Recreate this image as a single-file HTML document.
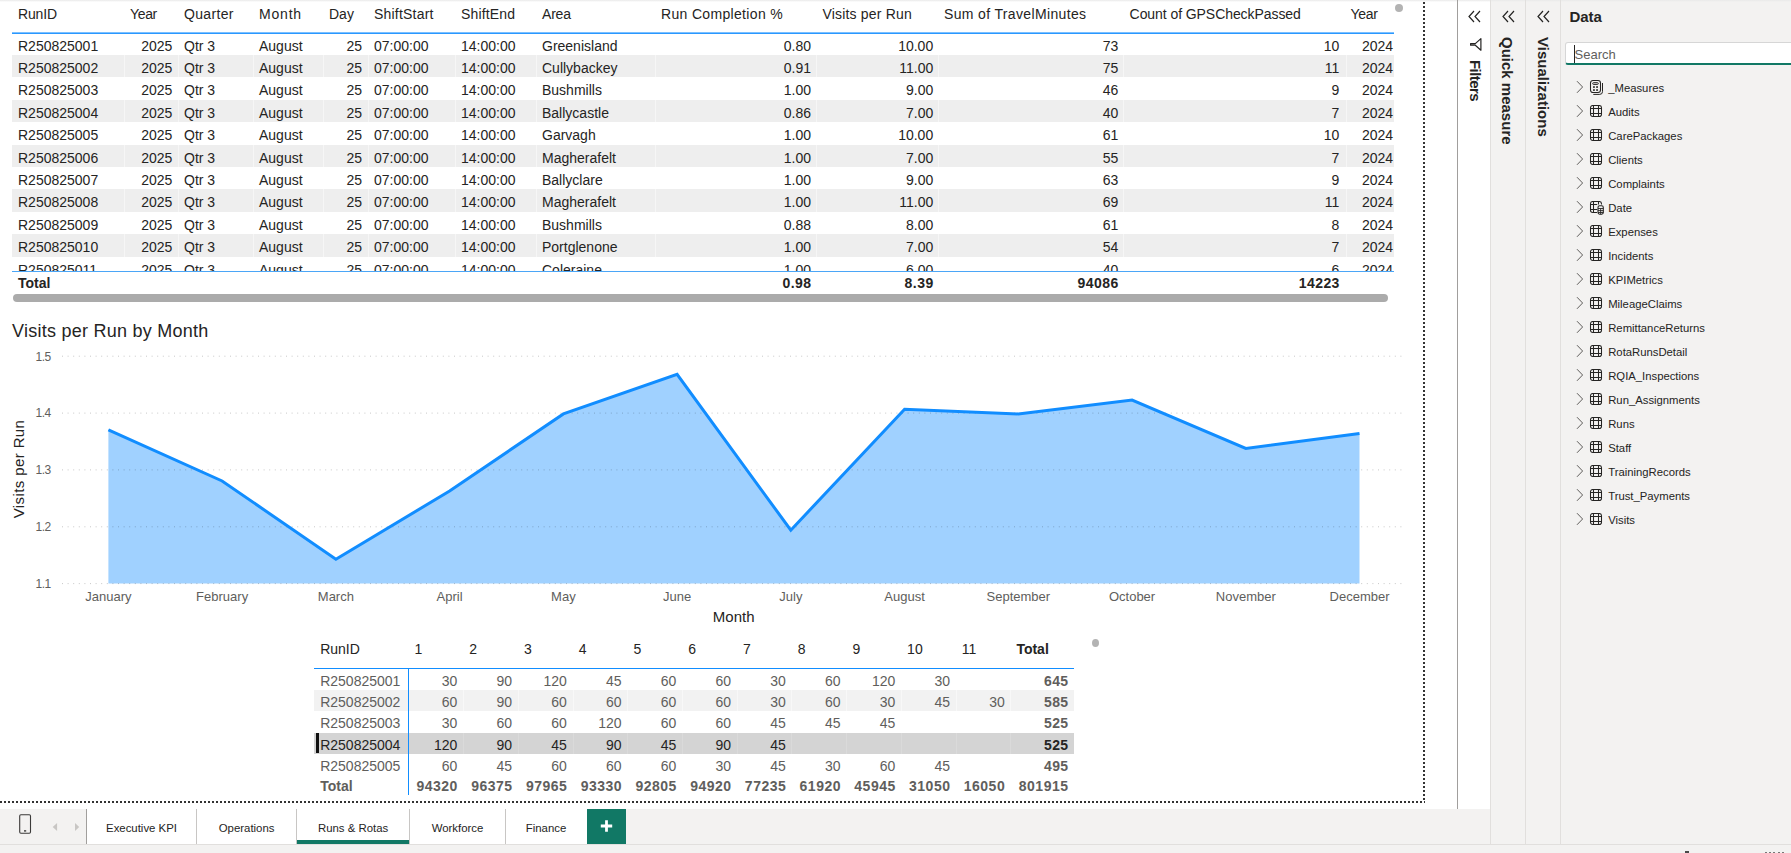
<!DOCTYPE html>
<html><head><meta charset="utf-8"><style>
html,body{margin:0;padding:0;}
body{width:1791px;height:853px;position:relative;overflow:hidden;font-family:"Liberation Sans", sans-serif;background:#fff;}
.t{position:absolute;white-space:nowrap;line-height:1;}
.r{position:absolute;}
.clip{position:absolute;overflow:hidden;}
</style></head><body>
<div class="r" style="left:0.00px;top:0.00px;width:1791.00px;height:853.00px;background:#f3f2f1;"></div>
<div class="r" style="left:0.00px;top:0.00px;width:1490.50px;height:809.00px;background:#ffffff;"></div>
<div class="r" style="left:0.00px;top:0.00px;width:1791.00px;height:2.00px;background:linear-gradient(#e9e9e9,#ffffff00);"></div>
<div class="r" style="left:1457.00px;top:0.00px;width:1.00px;height:809.00px;background:#a19f9d;"></div>
<div class="r" style="left:1490.00px;top:0.00px;width:1.00px;height:844.00px;background:#e1dfdd;"></div>
<div class="r" style="left:1525.00px;top:0.00px;width:1.00px;height:844.00px;background:#e1dfdd;"></div>
<div class="r" style="left:1560.00px;top:0.00px;width:1.00px;height:844.00px;background:#e1dfdd;"></div>
<div class="r" style="left:0.00px;top:843.50px;width:1791.00px;height:1.00px;background:#e1dfdd;"></div>
<div class="clip" style="left:0;top:0;width:1394px;height:271px;">
<div class="t" style="left:18.00px;top:38.65px;font-size:14px;font-weight:normal;color:#252423;">R250825001</div>
<div class="t" style="right:1221.60px;top:38.65px;font-size:14px;font-weight:normal;color:#252423;">2025</div>
<div class="t" style="left:184.00px;top:38.65px;font-size:14px;font-weight:normal;color:#252423;">Qtr 3</div>
<div class="t" style="left:259.00px;top:38.65px;font-size:14px;font-weight:normal;color:#252423;">August</div>
<div class="t" style="right:1032.00px;top:38.65px;font-size:14px;font-weight:normal;color:#252423;">25</div>
<div class="t" style="left:374.00px;top:38.65px;font-size:14px;font-weight:normal;color:#252423;">07:00:00</div>
<div class="t" style="left:461.00px;top:38.65px;font-size:14px;font-weight:normal;color:#252423;">14:00:00</div>
<div class="t" style="left:542.00px;top:38.65px;font-size:14px;font-weight:normal;color:#252423;">Greenisland</div>
<div class="t" style="right:583.00px;top:38.65px;font-size:14px;font-weight:normal;color:#252423;">0.80</div>
<div class="t" style="right:460.80px;top:38.65px;font-size:14px;font-weight:normal;color:#252423;">10.00</div>
<div class="t" style="right:275.70px;top:38.65px;font-size:14px;font-weight:normal;color:#252423;">73</div>
<div class="t" style="right:54.60px;top:38.65px;font-size:14px;font-weight:normal;color:#252423;">10</div>
<div class="t" style="right:0.90px;top:38.65px;font-size:14px;font-weight:normal;color:#252423;">2024</div>
<div class="r" style="left:12.00px;top:55.00px;width:1382.00px;height:22.40px;background:#eeeeee;"></div>
<div class="r" style="left:124.00px;top:55.00px;width:1.00px;height:22.40px;background:#f6f6f6;"></div>
<div class="r" style="left:178.00px;top:55.00px;width:1.00px;height:22.40px;background:#f6f6f6;"></div>
<div class="r" style="left:253.00px;top:55.00px;width:1.00px;height:22.40px;background:#f6f6f6;"></div>
<div class="r" style="left:323.00px;top:55.00px;width:1.00px;height:22.40px;background:#f6f6f6;"></div>
<div class="r" style="left:368.00px;top:55.00px;width:1.00px;height:22.40px;background:#f6f6f6;"></div>
<div class="r" style="left:455.00px;top:55.00px;width:1.00px;height:22.40px;background:#f6f6f6;"></div>
<div class="r" style="left:536.00px;top:55.00px;width:1.00px;height:22.40px;background:#f6f6f6;"></div>
<div class="r" style="left:655.00px;top:55.00px;width:1.00px;height:22.40px;background:#f6f6f6;"></div>
<div class="r" style="left:816.00px;top:55.00px;width:1.00px;height:22.40px;background:#f6f6f6;"></div>
<div class="r" style="left:938.00px;top:55.00px;width:1.00px;height:22.40px;background:#f6f6f6;"></div>
<div class="r" style="left:1123.00px;top:55.00px;width:1.00px;height:22.40px;background:#f6f6f6;"></div>
<div class="r" style="left:1345.50px;top:55.00px;width:1.00px;height:22.40px;background:#f6f6f6;"></div>
<div class="t" style="left:18.00px;top:61.05px;font-size:14px;font-weight:normal;color:#252423;">R250825002</div>
<div class="t" style="right:1221.60px;top:61.05px;font-size:14px;font-weight:normal;color:#252423;">2025</div>
<div class="t" style="left:184.00px;top:61.05px;font-size:14px;font-weight:normal;color:#252423;">Qtr 3</div>
<div class="t" style="left:259.00px;top:61.05px;font-size:14px;font-weight:normal;color:#252423;">August</div>
<div class="t" style="right:1032.00px;top:61.05px;font-size:14px;font-weight:normal;color:#252423;">25</div>
<div class="t" style="left:374.00px;top:61.05px;font-size:14px;font-weight:normal;color:#252423;">07:00:00</div>
<div class="t" style="left:461.00px;top:61.05px;font-size:14px;font-weight:normal;color:#252423;">14:00:00</div>
<div class="t" style="left:542.00px;top:61.05px;font-size:14px;font-weight:normal;color:#252423;">Cullybackey</div>
<div class="t" style="right:583.00px;top:61.05px;font-size:14px;font-weight:normal;color:#252423;">0.91</div>
<div class="t" style="right:460.80px;top:61.05px;font-size:14px;font-weight:normal;color:#252423;">11.00</div>
<div class="t" style="right:275.70px;top:61.05px;font-size:14px;font-weight:normal;color:#252423;">75</div>
<div class="t" style="right:54.60px;top:61.05px;font-size:14px;font-weight:normal;color:#252423;">11</div>
<div class="t" style="right:0.90px;top:61.05px;font-size:14px;font-weight:normal;color:#252423;">2024</div>
<div class="t" style="left:18.00px;top:83.45px;font-size:14px;font-weight:normal;color:#252423;">R250825003</div>
<div class="t" style="right:1221.60px;top:83.45px;font-size:14px;font-weight:normal;color:#252423;">2025</div>
<div class="t" style="left:184.00px;top:83.45px;font-size:14px;font-weight:normal;color:#252423;">Qtr 3</div>
<div class="t" style="left:259.00px;top:83.45px;font-size:14px;font-weight:normal;color:#252423;">August</div>
<div class="t" style="right:1032.00px;top:83.45px;font-size:14px;font-weight:normal;color:#252423;">25</div>
<div class="t" style="left:374.00px;top:83.45px;font-size:14px;font-weight:normal;color:#252423;">07:00:00</div>
<div class="t" style="left:461.00px;top:83.45px;font-size:14px;font-weight:normal;color:#252423;">14:00:00</div>
<div class="t" style="left:542.00px;top:83.45px;font-size:14px;font-weight:normal;color:#252423;">Bushmills</div>
<div class="t" style="right:583.00px;top:83.45px;font-size:14px;font-weight:normal;color:#252423;">1.00</div>
<div class="t" style="right:460.80px;top:83.45px;font-size:14px;font-weight:normal;color:#252423;">9.00</div>
<div class="t" style="right:275.70px;top:83.45px;font-size:14px;font-weight:normal;color:#252423;">46</div>
<div class="t" style="right:54.60px;top:83.45px;font-size:14px;font-weight:normal;color:#252423;">9</div>
<div class="t" style="right:0.90px;top:83.45px;font-size:14px;font-weight:normal;color:#252423;">2024</div>
<div class="r" style="left:12.00px;top:99.80px;width:1382.00px;height:22.40px;background:#eeeeee;"></div>
<div class="r" style="left:124.00px;top:99.80px;width:1.00px;height:22.40px;background:#f6f6f6;"></div>
<div class="r" style="left:178.00px;top:99.80px;width:1.00px;height:22.40px;background:#f6f6f6;"></div>
<div class="r" style="left:253.00px;top:99.80px;width:1.00px;height:22.40px;background:#f6f6f6;"></div>
<div class="r" style="left:323.00px;top:99.80px;width:1.00px;height:22.40px;background:#f6f6f6;"></div>
<div class="r" style="left:368.00px;top:99.80px;width:1.00px;height:22.40px;background:#f6f6f6;"></div>
<div class="r" style="left:455.00px;top:99.80px;width:1.00px;height:22.40px;background:#f6f6f6;"></div>
<div class="r" style="left:536.00px;top:99.80px;width:1.00px;height:22.40px;background:#f6f6f6;"></div>
<div class="r" style="left:655.00px;top:99.80px;width:1.00px;height:22.40px;background:#f6f6f6;"></div>
<div class="r" style="left:816.00px;top:99.80px;width:1.00px;height:22.40px;background:#f6f6f6;"></div>
<div class="r" style="left:938.00px;top:99.80px;width:1.00px;height:22.40px;background:#f6f6f6;"></div>
<div class="r" style="left:1123.00px;top:99.80px;width:1.00px;height:22.40px;background:#f6f6f6;"></div>
<div class="r" style="left:1345.50px;top:99.80px;width:1.00px;height:22.40px;background:#f6f6f6;"></div>
<div class="t" style="left:18.00px;top:105.85px;font-size:14px;font-weight:normal;color:#252423;">R250825004</div>
<div class="t" style="right:1221.60px;top:105.85px;font-size:14px;font-weight:normal;color:#252423;">2025</div>
<div class="t" style="left:184.00px;top:105.85px;font-size:14px;font-weight:normal;color:#252423;">Qtr 3</div>
<div class="t" style="left:259.00px;top:105.85px;font-size:14px;font-weight:normal;color:#252423;">August</div>
<div class="t" style="right:1032.00px;top:105.85px;font-size:14px;font-weight:normal;color:#252423;">25</div>
<div class="t" style="left:374.00px;top:105.85px;font-size:14px;font-weight:normal;color:#252423;">07:00:00</div>
<div class="t" style="left:461.00px;top:105.85px;font-size:14px;font-weight:normal;color:#252423;">14:00:00</div>
<div class="t" style="left:542.00px;top:105.85px;font-size:14px;font-weight:normal;color:#252423;">Ballycastle</div>
<div class="t" style="right:583.00px;top:105.85px;font-size:14px;font-weight:normal;color:#252423;">0.86</div>
<div class="t" style="right:460.80px;top:105.85px;font-size:14px;font-weight:normal;color:#252423;">7.00</div>
<div class="t" style="right:275.70px;top:105.85px;font-size:14px;font-weight:normal;color:#252423;">40</div>
<div class="t" style="right:54.60px;top:105.85px;font-size:14px;font-weight:normal;color:#252423;">7</div>
<div class="t" style="right:0.90px;top:105.85px;font-size:14px;font-weight:normal;color:#252423;">2024</div>
<div class="t" style="left:18.00px;top:128.25px;font-size:14px;font-weight:normal;color:#252423;">R250825005</div>
<div class="t" style="right:1221.60px;top:128.25px;font-size:14px;font-weight:normal;color:#252423;">2025</div>
<div class="t" style="left:184.00px;top:128.25px;font-size:14px;font-weight:normal;color:#252423;">Qtr 3</div>
<div class="t" style="left:259.00px;top:128.25px;font-size:14px;font-weight:normal;color:#252423;">August</div>
<div class="t" style="right:1032.00px;top:128.25px;font-size:14px;font-weight:normal;color:#252423;">25</div>
<div class="t" style="left:374.00px;top:128.25px;font-size:14px;font-weight:normal;color:#252423;">07:00:00</div>
<div class="t" style="left:461.00px;top:128.25px;font-size:14px;font-weight:normal;color:#252423;">14:00:00</div>
<div class="t" style="left:542.00px;top:128.25px;font-size:14px;font-weight:normal;color:#252423;">Garvagh</div>
<div class="t" style="right:583.00px;top:128.25px;font-size:14px;font-weight:normal;color:#252423;">1.00</div>
<div class="t" style="right:460.80px;top:128.25px;font-size:14px;font-weight:normal;color:#252423;">10.00</div>
<div class="t" style="right:275.70px;top:128.25px;font-size:14px;font-weight:normal;color:#252423;">61</div>
<div class="t" style="right:54.60px;top:128.25px;font-size:14px;font-weight:normal;color:#252423;">10</div>
<div class="t" style="right:0.90px;top:128.25px;font-size:14px;font-weight:normal;color:#252423;">2024</div>
<div class="r" style="left:12.00px;top:144.60px;width:1382.00px;height:22.40px;background:#eeeeee;"></div>
<div class="r" style="left:124.00px;top:144.60px;width:1.00px;height:22.40px;background:#f6f6f6;"></div>
<div class="r" style="left:178.00px;top:144.60px;width:1.00px;height:22.40px;background:#f6f6f6;"></div>
<div class="r" style="left:253.00px;top:144.60px;width:1.00px;height:22.40px;background:#f6f6f6;"></div>
<div class="r" style="left:323.00px;top:144.60px;width:1.00px;height:22.40px;background:#f6f6f6;"></div>
<div class="r" style="left:368.00px;top:144.60px;width:1.00px;height:22.40px;background:#f6f6f6;"></div>
<div class="r" style="left:455.00px;top:144.60px;width:1.00px;height:22.40px;background:#f6f6f6;"></div>
<div class="r" style="left:536.00px;top:144.60px;width:1.00px;height:22.40px;background:#f6f6f6;"></div>
<div class="r" style="left:655.00px;top:144.60px;width:1.00px;height:22.40px;background:#f6f6f6;"></div>
<div class="r" style="left:816.00px;top:144.60px;width:1.00px;height:22.40px;background:#f6f6f6;"></div>
<div class="r" style="left:938.00px;top:144.60px;width:1.00px;height:22.40px;background:#f6f6f6;"></div>
<div class="r" style="left:1123.00px;top:144.60px;width:1.00px;height:22.40px;background:#f6f6f6;"></div>
<div class="r" style="left:1345.50px;top:144.60px;width:1.00px;height:22.40px;background:#f6f6f6;"></div>
<div class="t" style="left:18.00px;top:150.65px;font-size:14px;font-weight:normal;color:#252423;">R250825006</div>
<div class="t" style="right:1221.60px;top:150.65px;font-size:14px;font-weight:normal;color:#252423;">2025</div>
<div class="t" style="left:184.00px;top:150.65px;font-size:14px;font-weight:normal;color:#252423;">Qtr 3</div>
<div class="t" style="left:259.00px;top:150.65px;font-size:14px;font-weight:normal;color:#252423;">August</div>
<div class="t" style="right:1032.00px;top:150.65px;font-size:14px;font-weight:normal;color:#252423;">25</div>
<div class="t" style="left:374.00px;top:150.65px;font-size:14px;font-weight:normal;color:#252423;">07:00:00</div>
<div class="t" style="left:461.00px;top:150.65px;font-size:14px;font-weight:normal;color:#252423;">14:00:00</div>
<div class="t" style="left:542.00px;top:150.65px;font-size:14px;font-weight:normal;color:#252423;">Magherafelt</div>
<div class="t" style="right:583.00px;top:150.65px;font-size:14px;font-weight:normal;color:#252423;">1.00</div>
<div class="t" style="right:460.80px;top:150.65px;font-size:14px;font-weight:normal;color:#252423;">7.00</div>
<div class="t" style="right:275.70px;top:150.65px;font-size:14px;font-weight:normal;color:#252423;">55</div>
<div class="t" style="right:54.60px;top:150.65px;font-size:14px;font-weight:normal;color:#252423;">7</div>
<div class="t" style="right:0.90px;top:150.65px;font-size:14px;font-weight:normal;color:#252423;">2024</div>
<div class="t" style="left:18.00px;top:173.05px;font-size:14px;font-weight:normal;color:#252423;">R250825007</div>
<div class="t" style="right:1221.60px;top:173.05px;font-size:14px;font-weight:normal;color:#252423;">2025</div>
<div class="t" style="left:184.00px;top:173.05px;font-size:14px;font-weight:normal;color:#252423;">Qtr 3</div>
<div class="t" style="left:259.00px;top:173.05px;font-size:14px;font-weight:normal;color:#252423;">August</div>
<div class="t" style="right:1032.00px;top:173.05px;font-size:14px;font-weight:normal;color:#252423;">25</div>
<div class="t" style="left:374.00px;top:173.05px;font-size:14px;font-weight:normal;color:#252423;">07:00:00</div>
<div class="t" style="left:461.00px;top:173.05px;font-size:14px;font-weight:normal;color:#252423;">14:00:00</div>
<div class="t" style="left:542.00px;top:173.05px;font-size:14px;font-weight:normal;color:#252423;">Ballyclare</div>
<div class="t" style="right:583.00px;top:173.05px;font-size:14px;font-weight:normal;color:#252423;">1.00</div>
<div class="t" style="right:460.80px;top:173.05px;font-size:14px;font-weight:normal;color:#252423;">9.00</div>
<div class="t" style="right:275.70px;top:173.05px;font-size:14px;font-weight:normal;color:#252423;">63</div>
<div class="t" style="right:54.60px;top:173.05px;font-size:14px;font-weight:normal;color:#252423;">9</div>
<div class="t" style="right:0.90px;top:173.05px;font-size:14px;font-weight:normal;color:#252423;">2024</div>
<div class="r" style="left:12.00px;top:189.40px;width:1382.00px;height:22.40px;background:#eeeeee;"></div>
<div class="r" style="left:124.00px;top:189.40px;width:1.00px;height:22.40px;background:#f6f6f6;"></div>
<div class="r" style="left:178.00px;top:189.40px;width:1.00px;height:22.40px;background:#f6f6f6;"></div>
<div class="r" style="left:253.00px;top:189.40px;width:1.00px;height:22.40px;background:#f6f6f6;"></div>
<div class="r" style="left:323.00px;top:189.40px;width:1.00px;height:22.40px;background:#f6f6f6;"></div>
<div class="r" style="left:368.00px;top:189.40px;width:1.00px;height:22.40px;background:#f6f6f6;"></div>
<div class="r" style="left:455.00px;top:189.40px;width:1.00px;height:22.40px;background:#f6f6f6;"></div>
<div class="r" style="left:536.00px;top:189.40px;width:1.00px;height:22.40px;background:#f6f6f6;"></div>
<div class="r" style="left:655.00px;top:189.40px;width:1.00px;height:22.40px;background:#f6f6f6;"></div>
<div class="r" style="left:816.00px;top:189.40px;width:1.00px;height:22.40px;background:#f6f6f6;"></div>
<div class="r" style="left:938.00px;top:189.40px;width:1.00px;height:22.40px;background:#f6f6f6;"></div>
<div class="r" style="left:1123.00px;top:189.40px;width:1.00px;height:22.40px;background:#f6f6f6;"></div>
<div class="r" style="left:1345.50px;top:189.40px;width:1.00px;height:22.40px;background:#f6f6f6;"></div>
<div class="t" style="left:18.00px;top:195.45px;font-size:14px;font-weight:normal;color:#252423;">R250825008</div>
<div class="t" style="right:1221.60px;top:195.45px;font-size:14px;font-weight:normal;color:#252423;">2025</div>
<div class="t" style="left:184.00px;top:195.45px;font-size:14px;font-weight:normal;color:#252423;">Qtr 3</div>
<div class="t" style="left:259.00px;top:195.45px;font-size:14px;font-weight:normal;color:#252423;">August</div>
<div class="t" style="right:1032.00px;top:195.45px;font-size:14px;font-weight:normal;color:#252423;">25</div>
<div class="t" style="left:374.00px;top:195.45px;font-size:14px;font-weight:normal;color:#252423;">07:00:00</div>
<div class="t" style="left:461.00px;top:195.45px;font-size:14px;font-weight:normal;color:#252423;">14:00:00</div>
<div class="t" style="left:542.00px;top:195.45px;font-size:14px;font-weight:normal;color:#252423;">Magherafelt</div>
<div class="t" style="right:583.00px;top:195.45px;font-size:14px;font-weight:normal;color:#252423;">1.00</div>
<div class="t" style="right:460.80px;top:195.45px;font-size:14px;font-weight:normal;color:#252423;">11.00</div>
<div class="t" style="right:275.70px;top:195.45px;font-size:14px;font-weight:normal;color:#252423;">69</div>
<div class="t" style="right:54.60px;top:195.45px;font-size:14px;font-weight:normal;color:#252423;">11</div>
<div class="t" style="right:0.90px;top:195.45px;font-size:14px;font-weight:normal;color:#252423;">2024</div>
<div class="t" style="left:18.00px;top:217.85px;font-size:14px;font-weight:normal;color:#252423;">R250825009</div>
<div class="t" style="right:1221.60px;top:217.85px;font-size:14px;font-weight:normal;color:#252423;">2025</div>
<div class="t" style="left:184.00px;top:217.85px;font-size:14px;font-weight:normal;color:#252423;">Qtr 3</div>
<div class="t" style="left:259.00px;top:217.85px;font-size:14px;font-weight:normal;color:#252423;">August</div>
<div class="t" style="right:1032.00px;top:217.85px;font-size:14px;font-weight:normal;color:#252423;">25</div>
<div class="t" style="left:374.00px;top:217.85px;font-size:14px;font-weight:normal;color:#252423;">07:00:00</div>
<div class="t" style="left:461.00px;top:217.85px;font-size:14px;font-weight:normal;color:#252423;">14:00:00</div>
<div class="t" style="left:542.00px;top:217.85px;font-size:14px;font-weight:normal;color:#252423;">Bushmills</div>
<div class="t" style="right:583.00px;top:217.85px;font-size:14px;font-weight:normal;color:#252423;">0.88</div>
<div class="t" style="right:460.80px;top:217.85px;font-size:14px;font-weight:normal;color:#252423;">8.00</div>
<div class="t" style="right:275.70px;top:217.85px;font-size:14px;font-weight:normal;color:#252423;">61</div>
<div class="t" style="right:54.60px;top:217.85px;font-size:14px;font-weight:normal;color:#252423;">8</div>
<div class="t" style="right:0.90px;top:217.85px;font-size:14px;font-weight:normal;color:#252423;">2024</div>
<div class="r" style="left:12.00px;top:234.20px;width:1382.00px;height:22.40px;background:#eeeeee;"></div>
<div class="r" style="left:124.00px;top:234.20px;width:1.00px;height:22.40px;background:#f6f6f6;"></div>
<div class="r" style="left:178.00px;top:234.20px;width:1.00px;height:22.40px;background:#f6f6f6;"></div>
<div class="r" style="left:253.00px;top:234.20px;width:1.00px;height:22.40px;background:#f6f6f6;"></div>
<div class="r" style="left:323.00px;top:234.20px;width:1.00px;height:22.40px;background:#f6f6f6;"></div>
<div class="r" style="left:368.00px;top:234.20px;width:1.00px;height:22.40px;background:#f6f6f6;"></div>
<div class="r" style="left:455.00px;top:234.20px;width:1.00px;height:22.40px;background:#f6f6f6;"></div>
<div class="r" style="left:536.00px;top:234.20px;width:1.00px;height:22.40px;background:#f6f6f6;"></div>
<div class="r" style="left:655.00px;top:234.20px;width:1.00px;height:22.40px;background:#f6f6f6;"></div>
<div class="r" style="left:816.00px;top:234.20px;width:1.00px;height:22.40px;background:#f6f6f6;"></div>
<div class="r" style="left:938.00px;top:234.20px;width:1.00px;height:22.40px;background:#f6f6f6;"></div>
<div class="r" style="left:1123.00px;top:234.20px;width:1.00px;height:22.40px;background:#f6f6f6;"></div>
<div class="r" style="left:1345.50px;top:234.20px;width:1.00px;height:22.40px;background:#f6f6f6;"></div>
<div class="t" style="left:18.00px;top:240.25px;font-size:14px;font-weight:normal;color:#252423;">R250825010</div>
<div class="t" style="right:1221.60px;top:240.25px;font-size:14px;font-weight:normal;color:#252423;">2025</div>
<div class="t" style="left:184.00px;top:240.25px;font-size:14px;font-weight:normal;color:#252423;">Qtr 3</div>
<div class="t" style="left:259.00px;top:240.25px;font-size:14px;font-weight:normal;color:#252423;">August</div>
<div class="t" style="right:1032.00px;top:240.25px;font-size:14px;font-weight:normal;color:#252423;">25</div>
<div class="t" style="left:374.00px;top:240.25px;font-size:14px;font-weight:normal;color:#252423;">07:00:00</div>
<div class="t" style="left:461.00px;top:240.25px;font-size:14px;font-weight:normal;color:#252423;">14:00:00</div>
<div class="t" style="left:542.00px;top:240.25px;font-size:14px;font-weight:normal;color:#252423;">Portglenone</div>
<div class="t" style="right:583.00px;top:240.25px;font-size:14px;font-weight:normal;color:#252423;">1.00</div>
<div class="t" style="right:460.80px;top:240.25px;font-size:14px;font-weight:normal;color:#252423;">7.00</div>
<div class="t" style="right:275.70px;top:240.25px;font-size:14px;font-weight:normal;color:#252423;">54</div>
<div class="t" style="right:54.60px;top:240.25px;font-size:14px;font-weight:normal;color:#252423;">7</div>
<div class="t" style="right:0.90px;top:240.25px;font-size:14px;font-weight:normal;color:#252423;">2024</div>
<div class="t" style="left:18.00px;top:262.65px;font-size:14px;font-weight:normal;color:#252423;">R250825011</div>
<div class="t" style="right:1221.60px;top:262.65px;font-size:14px;font-weight:normal;color:#252423;">2025</div>
<div class="t" style="left:184.00px;top:262.65px;font-size:14px;font-weight:normal;color:#252423;">Qtr 3</div>
<div class="t" style="left:259.00px;top:262.65px;font-size:14px;font-weight:normal;color:#252423;">August</div>
<div class="t" style="right:1032.00px;top:262.65px;font-size:14px;font-weight:normal;color:#252423;">25</div>
<div class="t" style="left:374.00px;top:262.65px;font-size:14px;font-weight:normal;color:#252423;">07:00:00</div>
<div class="t" style="left:461.00px;top:262.65px;font-size:14px;font-weight:normal;color:#252423;">14:00:00</div>
<div class="t" style="left:542.00px;top:262.65px;font-size:14px;font-weight:normal;color:#252423;">Coleraine</div>
<div class="t" style="right:583.00px;top:262.65px;font-size:14px;font-weight:normal;color:#252423;">1.00</div>
<div class="t" style="right:460.80px;top:262.65px;font-size:14px;font-weight:normal;color:#252423;">6.00</div>
<div class="t" style="right:275.70px;top:262.65px;font-size:14px;font-weight:normal;color:#252423;">40</div>
<div class="t" style="right:54.60px;top:262.65px;font-size:14px;font-weight:normal;color:#252423;">6</div>
<div class="t" style="right:0.90px;top:262.65px;font-size:14px;font-weight:normal;color:#252423;">2024</div>
</div>
<div class="t" style="left:18.00px;top:6.90px;font-size:14px;font-weight:normal;color:#252423;letter-spacing:-0.15px;">RunID</div>
<div class="t" style="left:130.00px;top:6.90px;font-size:14px;font-weight:normal;color:#252423;letter-spacing:-0.35px;">Year</div>
<div class="t" style="left:184.00px;top:6.90px;font-size:14px;font-weight:normal;color:#252423;letter-spacing:0.33px;">Quarter</div>
<div class="t" style="left:259.00px;top:6.90px;font-size:14px;font-weight:normal;color:#252423;letter-spacing:0.8px;">Month</div>
<div class="t" style="left:329.00px;top:6.90px;font-size:14px;font-weight:normal;color:#252423;letter-spacing:0px;">Day</div>
<div class="t" style="left:374.00px;top:6.90px;font-size:14px;font-weight:normal;color:#252423;letter-spacing:0.2px;">ShiftStart</div>
<div class="t" style="left:461.00px;top:6.90px;font-size:14px;font-weight:normal;color:#252423;letter-spacing:0.17px;">ShiftEnd</div>
<div class="t" style="left:542.00px;top:6.90px;font-size:14px;font-weight:normal;color:#252423;letter-spacing:-0.2px;">Area</div>
<div class="t" style="left:661.00px;top:6.90px;font-size:14px;font-weight:normal;color:#252423;letter-spacing:0.33px;">Run Completion %</div>
<div class="t" style="left:822.50px;top:6.90px;font-size:14px;font-weight:normal;color:#252423;letter-spacing:0.18px;">Visits per Run</div>
<div class="t" style="left:944.00px;top:6.90px;font-size:14px;font-weight:normal;color:#252423;letter-spacing:0.35px;">Sum of TravelMinutes</div>
<div class="t" style="left:1129.60px;top:6.90px;font-size:14px;font-weight:normal;color:#252423;letter-spacing:-0.07px;">Count of GPSCheckPassed</div>
<div class="t" style="left:1350.60px;top:6.90px;font-size:14px;font-weight:normal;color:#252423;letter-spacing:-0.35px;">Year</div>
<div class="r" style="left:12.00px;top:32.00px;width:1382.00px;height:1.00px;background:rgba(17,141,255,0.55);"></div>
<div class="r" style="left:12.00px;top:33.00px;width:1382.00px;height:1.00px;background:#2a98ff;"></div>
<div class="r" style="left:12.00px;top:270.80px;width:1382.00px;height:1.00px;background:#4ba6f7;"></div>
<div class="t" style="left:18.00px;top:275.75px;font-size:14px;font-weight:bold;color:#252423;">Total</div>
<div class="t" style="right:979.55px;top:275.75px;font-size:14px;font-weight:bold;color:#252423;letter-spacing:0.45px;">0.98</div>
<div class="t" style="right:857.35px;top:275.75px;font-size:14px;font-weight:bold;color:#252423;letter-spacing:0.45px;">8.39</div>
<div class="t" style="right:672.25px;top:275.75px;font-size:14px;font-weight:bold;color:#252423;letter-spacing:0.45px;">94086</div>
<div class="t" style="right:451.15px;top:275.75px;font-size:14px;font-weight:bold;color:#252423;letter-spacing:0.45px;">14223</div>
<div class="r" style="left:13.00px;top:294.20px;width:1375.00px;height:7.50px;background:#ababab;border-radius:4px;"></div>
<div class="r" style="left:1395.00px;top:4.00px;width:8.00px;height:8.00px;background:#b3b3b3;border-radius:50%;"></div>
<div class="t" style="left:12.00px;top:321.56px;font-size:18px;font-weight:normal;color:#252423;letter-spacing:0.25px;">Visits per Run by Month</div>
<div class="t" style="right:1740.15px;top:350.64px;font-size:12px;font-weight:normal;color:#605e5c;letter-spacing:-0.45px;">1.5</div>
<div class="t" style="right:1740.15px;top:407.49px;font-size:12px;font-weight:normal;color:#605e5c;letter-spacing:-0.45px;">1.4</div>
<div class="t" style="right:1740.15px;top:464.34px;font-size:12px;font-weight:normal;color:#605e5c;letter-spacing:-0.45px;">1.3</div>
<div class="t" style="right:1740.15px;top:521.19px;font-size:12px;font-weight:normal;color:#605e5c;letter-spacing:-0.45px;">1.2</div>
<div class="t" style="right:1740.15px;top:578.04px;font-size:12px;font-weight:normal;color:#605e5c;letter-spacing:-0.45px;">1.1</div>
<svg class="r" style="left:0;top:0" width="1791" height="853" viewBox="0 0 1791 853"><polygon points="108.4,583.6 108.4,429.8 222.1,481.0 335.9,559.2 449.6,491.0 563.4,413.9 677.1,374.3 790.8,530.2 904.6,409.3 1018.3,413.9 1132.1,400.0 1245.8,448.4 1359.5,433.6 1359.5,583.6" fill="#a0d1ff"/><line x1="62" y1="356.2" x2="1404" y2="356.2" stroke="rgba(0,0,0,0.22)" stroke-width="1" stroke-dasharray="1 4.6"/><line x1="62" y1="413.1" x2="1404" y2="413.1" stroke="rgba(0,0,0,0.22)" stroke-width="1" stroke-dasharray="1 4.6"/><line x1="62" y1="469.9" x2="1404" y2="469.9" stroke="rgba(0,0,0,0.22)" stroke-width="1" stroke-dasharray="1 4.6"/><line x1="62" y1="526.8" x2="1404" y2="526.8" stroke="rgba(0,0,0,0.22)" stroke-width="1" stroke-dasharray="1 4.6"/><line x1="62" y1="583.6" x2="1404" y2="583.6" stroke="rgba(0,0,0,0.22)" stroke-width="1" stroke-dasharray="1 4.6"/><polyline points="108.4,429.8 222.1,481.0 335.9,559.2 449.6,491.0 563.4,413.9 677.1,374.3 790.8,530.2 904.6,409.3 1018.3,413.9 1132.1,400.0 1245.8,448.4 1359.5,433.6" fill="none" stroke="#118dff" stroke-width="3" stroke-linejoin="miter"/></svg>
<div class="t" style="left:108.40px;transform:translateX(-50%);top:590.10px;font-size:13px;font-weight:normal;color:#605e5c;">January</div>
<div class="t" style="left:222.14px;transform:translateX(-50%);top:590.10px;font-size:13px;font-weight:normal;color:#605e5c;">February</div>
<div class="t" style="left:335.88px;transform:translateX(-50%);top:590.10px;font-size:13px;font-weight:normal;color:#605e5c;">March</div>
<div class="t" style="left:449.62px;transform:translateX(-50%);top:590.10px;font-size:13px;font-weight:normal;color:#605e5c;">April</div>
<div class="t" style="left:563.36px;transform:translateX(-50%);top:590.10px;font-size:13px;font-weight:normal;color:#605e5c;">May</div>
<div class="t" style="left:677.10px;transform:translateX(-50%);top:590.10px;font-size:13px;font-weight:normal;color:#605e5c;">June</div>
<div class="t" style="left:790.84px;transform:translateX(-50%);top:590.10px;font-size:13px;font-weight:normal;color:#605e5c;">July</div>
<div class="t" style="left:904.58px;transform:translateX(-50%);top:590.10px;font-size:13px;font-weight:normal;color:#605e5c;">August</div>
<div class="t" style="left:1018.32px;transform:translateX(-50%);top:590.10px;font-size:13px;font-weight:normal;color:#605e5c;">September</div>
<div class="t" style="left:1132.06px;transform:translateX(-50%);top:590.10px;font-size:13px;font-weight:normal;color:#605e5c;">October</div>
<div class="t" style="left:1245.80px;transform:translateX(-50%);top:590.10px;font-size:13px;font-weight:normal;color:#605e5c;">November</div>
<div class="t" style="left:1359.54px;transform:translateX(-50%);top:590.10px;font-size:13px;font-weight:normal;color:#605e5c;">December</div>
<div class="t" style="left:733.70px;transform:translateX(-50%);top:609.10px;font-size:15px;font-weight:normal;color:#252423;">Month</div>
<div class="t" style="left:17.8px;top:469.3px;font-size:15px;color:#252423;letter-spacing:0.4px;transform:translate(-50%,-50%) rotate(-90deg);line-height:15px;">Visits per Run</div>
<div class="r" style="left:314.00px;top:668.00px;width:760.30px;height:1.20px;background:#118dff;"></div>
<div class="t" style="left:320.20px;top:642.15px;font-size:14px;font-weight:normal;color:#252423;">RunID</div>
<div class="t" style="left:414.62px;top:642.15px;font-size:14px;font-weight:normal;color:#252423;">1</div>
<div class="t" style="left:469.34px;top:642.15px;font-size:14px;font-weight:normal;color:#252423;">2</div>
<div class="t" style="left:524.06px;top:642.15px;font-size:14px;font-weight:normal;color:#252423;">3</div>
<div class="t" style="left:578.78px;top:642.15px;font-size:14px;font-weight:normal;color:#252423;">4</div>
<div class="t" style="left:633.50px;top:642.15px;font-size:14px;font-weight:normal;color:#252423;">5</div>
<div class="t" style="left:688.22px;top:642.15px;font-size:14px;font-weight:normal;color:#252423;">6</div>
<div class="t" style="left:742.94px;top:642.15px;font-size:14px;font-weight:normal;color:#252423;">7</div>
<div class="t" style="left:797.66px;top:642.15px;font-size:14px;font-weight:normal;color:#252423;">8</div>
<div class="t" style="left:852.38px;top:642.15px;font-size:14px;font-weight:normal;color:#252423;">9</div>
<div class="t" style="left:907.10px;top:642.15px;font-size:14px;font-weight:normal;color:#252423;">10</div>
<div class="t" style="left:961.82px;top:642.15px;font-size:14px;font-weight:normal;color:#252423;">11</div>
<div class="t" style="left:1016.40px;top:642.15px;font-size:14px;font-weight:bold;color:#252423;">Total</div>
<div class="t" style="left:320.20px;top:673.85px;font-size:14px;font-weight:normal;color:#605e5c;">R250825001</div>
<div class="t" style="right:1333.60px;top:673.85px;font-size:14px;font-weight:normal;color:#605e5c;">30</div>
<div class="t" style="right:1278.87px;top:673.85px;font-size:14px;font-weight:normal;color:#605e5c;">90</div>
<div class="t" style="right:1224.14px;top:673.85px;font-size:14px;font-weight:normal;color:#605e5c;">120</div>
<div class="t" style="right:1169.41px;top:673.85px;font-size:14px;font-weight:normal;color:#605e5c;">45</div>
<div class="t" style="right:1114.68px;top:673.85px;font-size:14px;font-weight:normal;color:#605e5c;">60</div>
<div class="t" style="right:1059.95px;top:673.85px;font-size:14px;font-weight:normal;color:#605e5c;">60</div>
<div class="t" style="right:1005.22px;top:673.85px;font-size:14px;font-weight:normal;color:#605e5c;">30</div>
<div class="t" style="right:950.49px;top:673.85px;font-size:14px;font-weight:normal;color:#605e5c;">60</div>
<div class="t" style="right:895.76px;top:673.85px;font-size:14px;font-weight:normal;color:#605e5c;">120</div>
<div class="t" style="right:841.03px;top:673.85px;font-size:14px;font-weight:normal;color:#605e5c;">30</div>
<div class="t" style="right:722.70px;top:673.85px;font-size:14px;font-weight:bold;color:#605e5c;letter-spacing:0.3px;">645</div>
<div class="r" style="left:314.00px;top:689.90px;width:760.30px;height:21.30px;background:#f2f2f2;"></div>
<div class="r" style="left:463.14px;top:689.90px;width:1.00px;height:21.30px;background:#f8f8f8;"></div>
<div class="r" style="left:517.86px;top:689.90px;width:1.00px;height:21.30px;background:#f8f8f8;"></div>
<div class="r" style="left:572.58px;top:689.90px;width:1.00px;height:21.30px;background:#f8f8f8;"></div>
<div class="r" style="left:627.30px;top:689.90px;width:1.00px;height:21.30px;background:#f8f8f8;"></div>
<div class="r" style="left:682.02px;top:689.90px;width:1.00px;height:21.30px;background:#f8f8f8;"></div>
<div class="r" style="left:736.74px;top:689.90px;width:1.00px;height:21.30px;background:#f8f8f8;"></div>
<div class="r" style="left:791.46px;top:689.90px;width:1.00px;height:21.30px;background:#f8f8f8;"></div>
<div class="r" style="left:846.18px;top:689.90px;width:1.00px;height:21.30px;background:#f8f8f8;"></div>
<div class="r" style="left:900.90px;top:689.90px;width:1.00px;height:21.30px;background:#f8f8f8;"></div>
<div class="r" style="left:955.62px;top:689.90px;width:1.00px;height:21.30px;background:#f8f8f8;"></div>
<div class="r" style="left:1010.34px;top:689.90px;width:1.00px;height:21.30px;background:#f8f8f8;"></div>
<div class="t" style="left:320.20px;top:695.15px;font-size:14px;font-weight:normal;color:#605e5c;">R250825002</div>
<div class="t" style="right:1333.60px;top:695.15px;font-size:14px;font-weight:normal;color:#605e5c;">60</div>
<div class="t" style="right:1278.87px;top:695.15px;font-size:14px;font-weight:normal;color:#605e5c;">90</div>
<div class="t" style="right:1224.14px;top:695.15px;font-size:14px;font-weight:normal;color:#605e5c;">60</div>
<div class="t" style="right:1169.41px;top:695.15px;font-size:14px;font-weight:normal;color:#605e5c;">60</div>
<div class="t" style="right:1114.68px;top:695.15px;font-size:14px;font-weight:normal;color:#605e5c;">60</div>
<div class="t" style="right:1059.95px;top:695.15px;font-size:14px;font-weight:normal;color:#605e5c;">60</div>
<div class="t" style="right:1005.22px;top:695.15px;font-size:14px;font-weight:normal;color:#605e5c;">30</div>
<div class="t" style="right:950.49px;top:695.15px;font-size:14px;font-weight:normal;color:#605e5c;">60</div>
<div class="t" style="right:895.76px;top:695.15px;font-size:14px;font-weight:normal;color:#605e5c;">30</div>
<div class="t" style="right:841.03px;top:695.15px;font-size:14px;font-weight:normal;color:#605e5c;">45</div>
<div class="t" style="right:786.30px;top:695.15px;font-size:14px;font-weight:normal;color:#605e5c;">30</div>
<div class="t" style="right:722.70px;top:695.15px;font-size:14px;font-weight:bold;color:#605e5c;letter-spacing:0.3px;">585</div>
<div class="t" style="left:320.20px;top:716.45px;font-size:14px;font-weight:normal;color:#605e5c;">R250825003</div>
<div class="t" style="right:1333.60px;top:716.45px;font-size:14px;font-weight:normal;color:#605e5c;">30</div>
<div class="t" style="right:1278.87px;top:716.45px;font-size:14px;font-weight:normal;color:#605e5c;">60</div>
<div class="t" style="right:1224.14px;top:716.45px;font-size:14px;font-weight:normal;color:#605e5c;">60</div>
<div class="t" style="right:1169.41px;top:716.45px;font-size:14px;font-weight:normal;color:#605e5c;">120</div>
<div class="t" style="right:1114.68px;top:716.45px;font-size:14px;font-weight:normal;color:#605e5c;">60</div>
<div class="t" style="right:1059.95px;top:716.45px;font-size:14px;font-weight:normal;color:#605e5c;">60</div>
<div class="t" style="right:1005.22px;top:716.45px;font-size:14px;font-weight:normal;color:#605e5c;">45</div>
<div class="t" style="right:950.49px;top:716.45px;font-size:14px;font-weight:normal;color:#605e5c;">45</div>
<div class="t" style="right:895.76px;top:716.45px;font-size:14px;font-weight:normal;color:#605e5c;">45</div>
<div class="t" style="right:722.70px;top:716.45px;font-size:14px;font-weight:bold;color:#605e5c;letter-spacing:0.3px;">525</div>
<div class="r" style="left:314.00px;top:732.50px;width:760.30px;height:21.30px;background:#d4d4d4;"></div>
<div class="r" style="left:463.14px;top:732.50px;width:1.00px;height:21.30px;background:#dadada;"></div>
<div class="r" style="left:517.86px;top:732.50px;width:1.00px;height:21.30px;background:#dadada;"></div>
<div class="r" style="left:572.58px;top:732.50px;width:1.00px;height:21.30px;background:#dadada;"></div>
<div class="r" style="left:627.30px;top:732.50px;width:1.00px;height:21.30px;background:#dadada;"></div>
<div class="r" style="left:682.02px;top:732.50px;width:1.00px;height:21.30px;background:#dadada;"></div>
<div class="r" style="left:736.74px;top:732.50px;width:1.00px;height:21.30px;background:#dadada;"></div>
<div class="r" style="left:791.46px;top:732.50px;width:1.00px;height:21.30px;background:#dadada;"></div>
<div class="r" style="left:846.18px;top:732.50px;width:1.00px;height:21.30px;background:#dadada;"></div>
<div class="r" style="left:900.90px;top:732.50px;width:1.00px;height:21.30px;background:#dadada;"></div>
<div class="r" style="left:955.62px;top:732.50px;width:1.00px;height:21.30px;background:#dadada;"></div>
<div class="r" style="left:1010.34px;top:732.50px;width:1.00px;height:21.30px;background:#dadada;"></div>
<div class="r" style="left:316.20px;top:733.00px;width:3.00px;height:20.30px;background:#111111;"></div>
<div class="t" style="left:320.20px;top:737.75px;font-size:14px;font-weight:normal;color:#252423;">R250825004</div>
<div class="t" style="right:1333.60px;top:737.75px;font-size:14px;font-weight:normal;color:#252423;">120</div>
<div class="t" style="right:1278.87px;top:737.75px;font-size:14px;font-weight:normal;color:#252423;">90</div>
<div class="t" style="right:1224.14px;top:737.75px;font-size:14px;font-weight:normal;color:#252423;">45</div>
<div class="t" style="right:1169.41px;top:737.75px;font-size:14px;font-weight:normal;color:#252423;">90</div>
<div class="t" style="right:1114.68px;top:737.75px;font-size:14px;font-weight:normal;color:#252423;">45</div>
<div class="t" style="right:1059.95px;top:737.75px;font-size:14px;font-weight:normal;color:#252423;">90</div>
<div class="t" style="right:1005.22px;top:737.75px;font-size:14px;font-weight:normal;color:#252423;">45</div>
<div class="t" style="right:722.70px;top:737.75px;font-size:14px;font-weight:bold;color:#252423;letter-spacing:0.3px;">525</div>
<div class="t" style="left:320.20px;top:759.05px;font-size:14px;font-weight:normal;color:#605e5c;">R250825005</div>
<div class="t" style="right:1333.60px;top:759.05px;font-size:14px;font-weight:normal;color:#605e5c;">60</div>
<div class="t" style="right:1278.87px;top:759.05px;font-size:14px;font-weight:normal;color:#605e5c;">45</div>
<div class="t" style="right:1224.14px;top:759.05px;font-size:14px;font-weight:normal;color:#605e5c;">60</div>
<div class="t" style="right:1169.41px;top:759.05px;font-size:14px;font-weight:normal;color:#605e5c;">60</div>
<div class="t" style="right:1114.68px;top:759.05px;font-size:14px;font-weight:normal;color:#605e5c;">60</div>
<div class="t" style="right:1059.95px;top:759.05px;font-size:14px;font-weight:normal;color:#605e5c;">30</div>
<div class="t" style="right:1005.22px;top:759.05px;font-size:14px;font-weight:normal;color:#605e5c;">45</div>
<div class="t" style="right:950.49px;top:759.05px;font-size:14px;font-weight:normal;color:#605e5c;">30</div>
<div class="t" style="right:895.76px;top:759.05px;font-size:14px;font-weight:normal;color:#605e5c;">60</div>
<div class="t" style="right:841.03px;top:759.05px;font-size:14px;font-weight:normal;color:#605e5c;">45</div>
<div class="t" style="right:722.70px;top:759.05px;font-size:14px;font-weight:bold;color:#605e5c;letter-spacing:0.3px;">495</div>
<div class="t" style="left:320.20px;top:779.05px;font-size:14px;font-weight:bold;color:#605e5c;">Total</div>
<div class="t" style="right:1333.10px;top:779.05px;font-size:14px;font-weight:bold;color:#605e5c;letter-spacing:0.5px;">94320</div>
<div class="t" style="right:1278.37px;top:779.05px;font-size:14px;font-weight:bold;color:#605e5c;letter-spacing:0.5px;">96375</div>
<div class="t" style="right:1223.64px;top:779.05px;font-size:14px;font-weight:bold;color:#605e5c;letter-spacing:0.5px;">97965</div>
<div class="t" style="right:1168.91px;top:779.05px;font-size:14px;font-weight:bold;color:#605e5c;letter-spacing:0.5px;">93330</div>
<div class="t" style="right:1114.18px;top:779.05px;font-size:14px;font-weight:bold;color:#605e5c;letter-spacing:0.5px;">92805</div>
<div class="t" style="right:1059.45px;top:779.05px;font-size:14px;font-weight:bold;color:#605e5c;letter-spacing:0.5px;">94920</div>
<div class="t" style="right:1004.72px;top:779.05px;font-size:14px;font-weight:bold;color:#605e5c;letter-spacing:0.5px;">77235</div>
<div class="t" style="right:949.99px;top:779.05px;font-size:14px;font-weight:bold;color:#605e5c;letter-spacing:0.5px;">61920</div>
<div class="t" style="right:895.26px;top:779.05px;font-size:14px;font-weight:bold;color:#605e5c;letter-spacing:0.5px;">45945</div>
<div class="t" style="right:840.53px;top:779.05px;font-size:14px;font-weight:bold;color:#605e5c;letter-spacing:0.5px;">31050</div>
<div class="t" style="right:785.80px;top:779.05px;font-size:14px;font-weight:bold;color:#605e5c;letter-spacing:0.5px;">16050</div>
<div class="t" style="right:722.50px;top:779.05px;font-size:14px;font-weight:bold;color:#605e5c;letter-spacing:0.5px;">801915</div>
<div class="r" style="left:408.00px;top:668.00px;width:1.20px;height:127.00px;background:#118dff;"></div>
<div class="r" style="left:1092.20px;top:638.80px;width:7.00px;height:8.00px;background:#b3b3b3;border-radius:50%;"></div>
<div class="r" style="left:1423px;top:2px;width:2px;height:800px;background:repeating-linear-gradient(to bottom,#333 0 2px,transparent 2px 4px);"></div>
<div class="r" style="left:0px;top:801px;width:1425px;height:2px;background:repeating-linear-gradient(to right,#333 0 2px,transparent 2px 4px);"></div>
<div class="r" style="left:86.40px;top:809.00px;width:500.60px;height:35.00px;background:#ffffff;"></div>
<div class="r" style="left:86.00px;top:809.00px;width:1.00px;height:35.00px;background:#a19f9d;"></div>
<div class="r" style="left:196.00px;top:809.00px;width:1.00px;height:35.00px;background:#c8c6c4;"></div>
<div class="r" style="left:296.00px;top:809.00px;width:1.00px;height:35.00px;background:#c8c6c4;"></div>
<div class="r" style="left:409.00px;top:809.00px;width:1.00px;height:35.00px;background:#c8c6c4;"></div>
<div class="r" style="left:505.00px;top:809.00px;width:1.00px;height:35.00px;background:#c8c6c4;"></div>
<div class="r" style="left:296.80px;top:840.30px;width:112.70px;height:3.70px;background:#117865;"></div>
<div class="t" style="left:141.50px;transform:translateX(-50%);top:823.15px;font-size:11.4px;font-weight:normal;color:#252423;">Executive KPI</div>
<div class="t" style="left:246.60px;transform:translateX(-50%);top:823.15px;font-size:11.4px;font-weight:normal;color:#252423;">Operations</div>
<div class="t" style="left:353.10px;transform:translateX(-50%);top:823.15px;font-size:11.4px;font-weight:normal;color:#252423;">Runs &amp; Rotas</div>
<div class="t" style="left:457.50px;transform:translateX(-50%);top:823.15px;font-size:11.4px;font-weight:normal;color:#252423;">Workforce</div>
<div class="t" style="left:546.00px;transform:translateX(-50%);top:823.15px;font-size:11.4px;font-weight:normal;color:#252423;">Finance</div>
<div class="r" style="left:587.00px;top:809.00px;width:39.00px;height:34.50px;background:#117865;"></div>
<svg class="r" style="left:587px;top:809px" width="39" height="35"><path d="M19.5 11.3v11.4M13.8 17h11.4" stroke="#fff" stroke-width="2.8"/></svg>
<svg class="r" style="left:0;top:808px" width="40" height="36"><rect x="19.7" y="6.8" width="10.8" height="18.4" rx="1.2" fill="none" stroke="#3b3a39" stroke-width="1.1"/><rect x="24" y="22.2" width="2.2" height="1.4" fill="#3b3a39"/></svg>
<svg class="r" style="left:0;top:808px" width="90" height="36"><path d="M52.7 19 L57.1 15 L57.1 23 Z M79.2 19 L75 15 L75 23 Z" fill="#c8c6c4"/></svg>
<svg class="r" style="left:1468px;top:10px" width="13" height="13"><path d="M6 1 L1 6.5 L6 12 M12 1 L7 6.5 L12 12" fill="none" stroke="#252423" stroke-width="1.2"/></svg>
<svg class="r" style="left:1502px;top:10px" width="13" height="13"><path d="M6 1 L1 6.5 L6 12 M12 1 L7 6.5 L12 12" fill="none" stroke="#252423" stroke-width="1.2"/></svg>
<svg class="r" style="left:1537px;top:10px" width="13" height="13"><path d="M6 1 L1 6.5 L6 12 M12 1 L7 6.5 L12 12" fill="none" stroke="#252423" stroke-width="1.2"/></svg>
<svg class="r" style="left:0;top:0" width="1491" height="60"><path d="M1480.9 38.6 L1480.9 50.2 L1475.3 45.2 L1470.6 45.2 L1470.6 43.6 L1475.3 43.6 Z" fill="none" stroke="#252423" stroke-width="1.2" stroke-linejoin="round"/></svg>
<div class="t" style="left:1475px;top:59.8px;font-size:15px;font-weight:bold;color:#252423;line-height:15px;letter-spacing:-0.55px;transform-origin:0 0;transform:rotate(90deg) translate(0,-50%);">Filters</div>
<div class="t" style="left:1507.00px;top:36.90px;font-size:15px;font-weight:bold;color:#252423;line-height:15px;transform-origin:0 0;transform:rotate(90deg) translate(0,-50%);">Quick measure</div>
<div class="t" style="left:1543.00px;top:36.90px;font-size:15px;font-weight:bold;color:#252423;line-height:15px;transform-origin:0 0;transform:rotate(90deg) translate(0,-50%);">Visualizations</div>
<div class="t" style="left:1569.40px;top:8.80px;font-size:15px;font-weight:bold;color:#252423;">Data</div>
<div class="r" style="left:1564.6px;top:42px;width:240px;height:20px;background:#fff;border:1px solid #d6d6d6;border-bottom:2px solid #117865;border-radius:3px;box-sizing:content-box;"></div>
<div class="r" style="left:1574.20px;top:45.30px;width:1.00px;height:17.60px;background:#252423;"></div>
<div class="t" style="left:1574.60px;top:47.50px;font-size:13px;font-weight:normal;color:#605e5c;">Search</div>
<svg class="r" style="left:1575px;top:80px" width="10" height="15"><path d="M2 1.2 L7.6 7 L2 12.8" fill="none" stroke="#605e5c" stroke-width="1"/></svg>
<svg class="r" style="left:1589px;top:79px" width="16" height="17"><rect x="1.5" y="1.5" width="10" height="12" rx="2.5" fill="none" stroke="#252423" stroke-width="1.05"/><rect x="3.7" y="3.7" width="5.6" height="1.7" rx="0.85" fill="none" stroke="#252423" stroke-width="1"/><rect x="4.1" y="7.2" width="1.7" height="1.7" fill="#252423"/><rect x="7.2" y="7.2" width="1.7" height="1.7" fill="#252423"/><rect x="4.1" y="10.2" width="1.7" height="1.7" fill="#252423"/><rect x="7.2" y="10.2" width="1.7" height="1.7" fill="#252423"/><path d="M13.5 4 V12.6 Q13.5 15.4 10.7 15.4 H4.3" fill="none" stroke="#252423" stroke-width="1"/></svg>
<div class="t" style="left:1608.20px;top:82.83px;font-size:11.3px;font-weight:normal;color:#252423;">_Measures</div>
<svg class="r" style="left:1575px;top:104px" width="10" height="15"><path d="M2 1.2 L7.6 7 L2 12.8" fill="none" stroke="#605e5c" stroke-width="1"/></svg>
<svg class="r" style="left:1589px;top:105px" width="15" height="14"><rect x="1.5" y="0.5" width="11" height="11" rx="2.3" fill="none" stroke="#252423" stroke-width="1.05"/><path d="M1.5 3.5 H12.5 M1.5 8.5 H12.5 M4.5 0.5 V11.5 M9.5 0.5 V11.5" fill="none" stroke="#252423" stroke-width="1.05"/></svg>
<div class="t" style="left:1608.20px;top:106.83px;font-size:11.3px;font-weight:normal;color:#252423;">Audits</div>
<svg class="r" style="left:1575px;top:128px" width="10" height="15"><path d="M2 1.2 L7.6 7 L2 12.8" fill="none" stroke="#605e5c" stroke-width="1"/></svg>
<svg class="r" style="left:1589px;top:129px" width="15" height="14"><rect x="1.5" y="0.5" width="11" height="11" rx="2.3" fill="none" stroke="#252423" stroke-width="1.05"/><path d="M1.5 3.5 H12.5 M1.5 8.5 H12.5 M4.5 0.5 V11.5 M9.5 0.5 V11.5" fill="none" stroke="#252423" stroke-width="1.05"/></svg>
<div class="t" style="left:1608.20px;top:130.83px;font-size:11.3px;font-weight:normal;color:#252423;">CarePackages</div>
<svg class="r" style="left:1575px;top:152px" width="10" height="15"><path d="M2 1.2 L7.6 7 L2 12.8" fill="none" stroke="#605e5c" stroke-width="1"/></svg>
<svg class="r" style="left:1589px;top:153px" width="15" height="14"><rect x="1.5" y="0.5" width="11" height="11" rx="2.3" fill="none" stroke="#252423" stroke-width="1.05"/><path d="M1.5 3.5 H12.5 M1.5 8.5 H12.5 M4.5 0.5 V11.5 M9.5 0.5 V11.5" fill="none" stroke="#252423" stroke-width="1.05"/></svg>
<div class="t" style="left:1608.20px;top:154.83px;font-size:11.3px;font-weight:normal;color:#252423;">Clients</div>
<svg class="r" style="left:1575px;top:176px" width="10" height="15"><path d="M2 1.2 L7.6 7 L2 12.8" fill="none" stroke="#605e5c" stroke-width="1"/></svg>
<svg class="r" style="left:1589px;top:177px" width="15" height="14"><rect x="1.5" y="0.5" width="11" height="11" rx="2.3" fill="none" stroke="#252423" stroke-width="1.05"/><path d="M1.5 3.5 H12.5 M1.5 8.5 H12.5 M4.5 0.5 V11.5 M9.5 0.5 V11.5" fill="none" stroke="#252423" stroke-width="1.05"/></svg>
<div class="t" style="left:1608.20px;top:178.83px;font-size:11.3px;font-weight:normal;color:#252423;">Complaints</div>
<svg class="r" style="left:1575px;top:200px" width="10" height="15"><path d="M2 1.2 L7.6 7 L2 12.8" fill="none" stroke="#605e5c" stroke-width="1"/></svg>
<svg class="r" style="left:1589px;top:201px" width="16" height="16"><path d="M8 11.5 H3.7 Q1.5 11.5 1.5 9.3 V2.7 Q1.5 0.5 3.7 0.5 H10.3 Q12.5 0.5 12.5 2.7 V3.6 M1.5 3.5 H8.2 M1.5 8.5 H8.2 M4.5 0.5 V11.5 M9.5 0.5 V3.4" fill="none" stroke="#252423" stroke-width="1.05"/><rect x="9" y="4.8" width="5.3" height="8.4" rx="1.6" fill="#f3f2f1" stroke="#252423" stroke-width="1.1"/><path d="M9 7.5 H14.3 M9 9.6 H14.3 M9 11.5 H14.3 M11.65 7.5 V13.2" fill="none" stroke="#252423" stroke-width="0.9"/></svg>
<div class="t" style="left:1608.20px;top:202.83px;font-size:11.3px;font-weight:normal;color:#252423;">Date</div>
<svg class="r" style="left:1575px;top:224px" width="10" height="15"><path d="M2 1.2 L7.6 7 L2 12.8" fill="none" stroke="#605e5c" stroke-width="1"/></svg>
<svg class="r" style="left:1589px;top:225px" width="15" height="14"><rect x="1.5" y="0.5" width="11" height="11" rx="2.3" fill="none" stroke="#252423" stroke-width="1.05"/><path d="M1.5 3.5 H12.5 M1.5 8.5 H12.5 M4.5 0.5 V11.5 M9.5 0.5 V11.5" fill="none" stroke="#252423" stroke-width="1.05"/></svg>
<div class="t" style="left:1608.20px;top:226.83px;font-size:11.3px;font-weight:normal;color:#252423;">Expenses</div>
<svg class="r" style="left:1575px;top:248px" width="10" height="15"><path d="M2 1.2 L7.6 7 L2 12.8" fill="none" stroke="#605e5c" stroke-width="1"/></svg>
<svg class="r" style="left:1589px;top:249px" width="15" height="14"><rect x="1.5" y="0.5" width="11" height="11" rx="2.3" fill="none" stroke="#252423" stroke-width="1.05"/><path d="M1.5 3.5 H12.5 M1.5 8.5 H12.5 M4.5 0.5 V11.5 M9.5 0.5 V11.5" fill="none" stroke="#252423" stroke-width="1.05"/></svg>
<div class="t" style="left:1608.20px;top:250.83px;font-size:11.3px;font-weight:normal;color:#252423;">Incidents</div>
<svg class="r" style="left:1575px;top:272px" width="10" height="15"><path d="M2 1.2 L7.6 7 L2 12.8" fill="none" stroke="#605e5c" stroke-width="1"/></svg>
<svg class="r" style="left:1589px;top:273px" width="15" height="14"><rect x="1.5" y="0.5" width="11" height="11" rx="2.3" fill="none" stroke="#252423" stroke-width="1.05"/><path d="M1.5 3.5 H12.5 M1.5 8.5 H12.5 M4.5 0.5 V11.5 M9.5 0.5 V11.5" fill="none" stroke="#252423" stroke-width="1.05"/></svg>
<div class="t" style="left:1608.20px;top:274.83px;font-size:11.3px;font-weight:normal;color:#252423;">KPIMetrics</div>
<svg class="r" style="left:1575px;top:296px" width="10" height="15"><path d="M2 1.2 L7.6 7 L2 12.8" fill="none" stroke="#605e5c" stroke-width="1"/></svg>
<svg class="r" style="left:1589px;top:297px" width="15" height="14"><rect x="1.5" y="0.5" width="11" height="11" rx="2.3" fill="none" stroke="#252423" stroke-width="1.05"/><path d="M1.5 3.5 H12.5 M1.5 8.5 H12.5 M4.5 0.5 V11.5 M9.5 0.5 V11.5" fill="none" stroke="#252423" stroke-width="1.05"/></svg>
<div class="t" style="left:1608.20px;top:298.83px;font-size:11.3px;font-weight:normal;color:#252423;">MileageClaims</div>
<svg class="r" style="left:1575px;top:320px" width="10" height="15"><path d="M2 1.2 L7.6 7 L2 12.8" fill="none" stroke="#605e5c" stroke-width="1"/></svg>
<svg class="r" style="left:1589px;top:321px" width="15" height="14"><rect x="1.5" y="0.5" width="11" height="11" rx="2.3" fill="none" stroke="#252423" stroke-width="1.05"/><path d="M1.5 3.5 H12.5 M1.5 8.5 H12.5 M4.5 0.5 V11.5 M9.5 0.5 V11.5" fill="none" stroke="#252423" stroke-width="1.05"/></svg>
<div class="t" style="left:1608.20px;top:322.83px;font-size:11.3px;font-weight:normal;color:#252423;">RemittanceReturns</div>
<svg class="r" style="left:1575px;top:344px" width="10" height="15"><path d="M2 1.2 L7.6 7 L2 12.8" fill="none" stroke="#605e5c" stroke-width="1"/></svg>
<svg class="r" style="left:1589px;top:345px" width="15" height="14"><rect x="1.5" y="0.5" width="11" height="11" rx="2.3" fill="none" stroke="#252423" stroke-width="1.05"/><path d="M1.5 3.5 H12.5 M1.5 8.5 H12.5 M4.5 0.5 V11.5 M9.5 0.5 V11.5" fill="none" stroke="#252423" stroke-width="1.05"/></svg>
<div class="t" style="left:1608.20px;top:346.83px;font-size:11.3px;font-weight:normal;color:#252423;">RotaRunsDetail</div>
<svg class="r" style="left:1575px;top:368px" width="10" height="15"><path d="M2 1.2 L7.6 7 L2 12.8" fill="none" stroke="#605e5c" stroke-width="1"/></svg>
<svg class="r" style="left:1589px;top:369px" width="15" height="14"><rect x="1.5" y="0.5" width="11" height="11" rx="2.3" fill="none" stroke="#252423" stroke-width="1.05"/><path d="M1.5 3.5 H12.5 M1.5 8.5 H12.5 M4.5 0.5 V11.5 M9.5 0.5 V11.5" fill="none" stroke="#252423" stroke-width="1.05"/></svg>
<div class="t" style="left:1608.20px;top:370.83px;font-size:11.3px;font-weight:normal;color:#252423;">RQIA_Inspections</div>
<svg class="r" style="left:1575px;top:392px" width="10" height="15"><path d="M2 1.2 L7.6 7 L2 12.8" fill="none" stroke="#605e5c" stroke-width="1"/></svg>
<svg class="r" style="left:1589px;top:393px" width="15" height="14"><rect x="1.5" y="0.5" width="11" height="11" rx="2.3" fill="none" stroke="#252423" stroke-width="1.05"/><path d="M1.5 3.5 H12.5 M1.5 8.5 H12.5 M4.5 0.5 V11.5 M9.5 0.5 V11.5" fill="none" stroke="#252423" stroke-width="1.05"/></svg>
<div class="t" style="left:1608.20px;top:394.83px;font-size:11.3px;font-weight:normal;color:#252423;">Run_Assignments</div>
<svg class="r" style="left:1575px;top:416px" width="10" height="15"><path d="M2 1.2 L7.6 7 L2 12.8" fill="none" stroke="#605e5c" stroke-width="1"/></svg>
<svg class="r" style="left:1589px;top:417px" width="15" height="14"><rect x="1.5" y="0.5" width="11" height="11" rx="2.3" fill="none" stroke="#252423" stroke-width="1.05"/><path d="M1.5 3.5 H12.5 M1.5 8.5 H12.5 M4.5 0.5 V11.5 M9.5 0.5 V11.5" fill="none" stroke="#252423" stroke-width="1.05"/></svg>
<div class="t" style="left:1608.20px;top:418.83px;font-size:11.3px;font-weight:normal;color:#252423;">Runs</div>
<svg class="r" style="left:1575px;top:440px" width="10" height="15"><path d="M2 1.2 L7.6 7 L2 12.8" fill="none" stroke="#605e5c" stroke-width="1"/></svg>
<svg class="r" style="left:1589px;top:441px" width="15" height="14"><rect x="1.5" y="0.5" width="11" height="11" rx="2.3" fill="none" stroke="#252423" stroke-width="1.05"/><path d="M1.5 3.5 H12.5 M1.5 8.5 H12.5 M4.5 0.5 V11.5 M9.5 0.5 V11.5" fill="none" stroke="#252423" stroke-width="1.05"/></svg>
<div class="t" style="left:1608.20px;top:442.83px;font-size:11.3px;font-weight:normal;color:#252423;">Staff</div>
<svg class="r" style="left:1575px;top:464px" width="10" height="15"><path d="M2 1.2 L7.6 7 L2 12.8" fill="none" stroke="#605e5c" stroke-width="1"/></svg>
<svg class="r" style="left:1589px;top:465px" width="15" height="14"><rect x="1.5" y="0.5" width="11" height="11" rx="2.3" fill="none" stroke="#252423" stroke-width="1.05"/><path d="M1.5 3.5 H12.5 M1.5 8.5 H12.5 M4.5 0.5 V11.5 M9.5 0.5 V11.5" fill="none" stroke="#252423" stroke-width="1.05"/></svg>
<div class="t" style="left:1608.20px;top:466.83px;font-size:11.3px;font-weight:normal;color:#252423;">TrainingRecords</div>
<svg class="r" style="left:1575px;top:488px" width="10" height="15"><path d="M2 1.2 L7.6 7 L2 12.8" fill="none" stroke="#605e5c" stroke-width="1"/></svg>
<svg class="r" style="left:1589px;top:489px" width="15" height="14"><rect x="1.5" y="0.5" width="11" height="11" rx="2.3" fill="none" stroke="#252423" stroke-width="1.05"/><path d="M1.5 3.5 H12.5 M1.5 8.5 H12.5 M4.5 0.5 V11.5 M9.5 0.5 V11.5" fill="none" stroke="#252423" stroke-width="1.05"/></svg>
<div class="t" style="left:1608.20px;top:490.83px;font-size:11.3px;font-weight:normal;color:#252423;">Trust_Payments</div>
<svg class="r" style="left:1575px;top:512px" width="10" height="15"><path d="M2 1.2 L7.6 7 L2 12.8" fill="none" stroke="#605e5c" stroke-width="1"/></svg>
<svg class="r" style="left:1589px;top:513px" width="15" height="14"><rect x="1.5" y="0.5" width="11" height="11" rx="2.3" fill="none" stroke="#252423" stroke-width="1.05"/><path d="M1.5 3.5 H12.5 M1.5 8.5 H12.5 M4.5 0.5 V11.5 M9.5 0.5 V11.5" fill="none" stroke="#252423" stroke-width="1.05"/></svg>
<div class="t" style="left:1608.20px;top:514.83px;font-size:11.3px;font-weight:normal;color:#252423;">Visits</div>
<div class="r" style="left:1685.00px;top:851.00px;width:3.50px;height:2.00px;background:#4a4a4a;"></div>
<div class="r" style="left:1764.50px;top:852.00px;width:2.20px;height:1.00px;background:#777;"></div>
<div class="r" style="left:1768.50px;top:852.00px;width:2.20px;height:1.00px;background:#777;"></div>
<div class="r" style="left:1773.00px;top:852.00px;width:2.20px;height:1.00px;background:#777;"></div>
<div class="r" style="left:1777.50px;top:852.00px;width:2.20px;height:1.00px;background:#777;"></div>
<div class="r" style="left:1782.00px;top:852.00px;width:2.20px;height:1.00px;background:#777;"></div>
</body></html>
